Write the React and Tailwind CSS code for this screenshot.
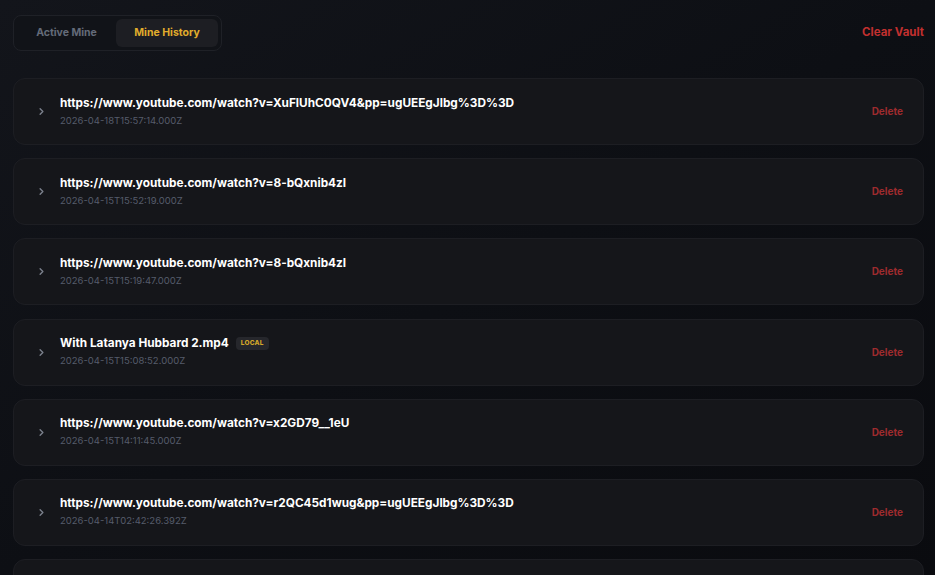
import { ChevronRight } from 'lucide-react';

const items = [
    { title: 'https://www.youtube.com/watch?v=XuFlUhC0QV4&pp=ugUEEgJlbg%3D%3D', date: '2026-04-18T15:57:14.000Z' },
    { title: 'https://www.youtube.com/watch?v=8-bQxnib4zI', date: '2026-04-15T15:52:19.000Z' },
    { title: 'https://www.youtube.com/watch?v=8-bQxnib4zI', date: '2026-04-15T15:19:47.000Z' },
    { title: 'With Latanya Hubbard 2.mp4', date: '2026-04-15T15:08:52.000Z', local: true },
    { title: 'https://www.youtube.com/watch?v=x2GD79__1eU', date: '2026-04-15T14:11:45.000Z' },
    { title: 'https://www.youtube.com/watch?v=r2QC45d1wug&pp=ugUEEgJlbg%3D%3D', date: '2026-04-14T02:42:26.392Z' },
    { title: 'https://www.youtube.com/watch?v=aQ0kLm3n9Xs', date: '2026-04-13T21:05:10.000Z' },
];

const HistoryRow = ({ item }) => {
    return (
        <div className="flex items-center h-[67px] shrink-0 rounded-xl border border-[#1d1e23] bg-[#15161a] pl-[22px] pr-5">
            <ChevronRight className="w-[11px] h-[11px] text-[#7b808c]" strokeWidth={3} />
            <div className="ml-[13px] flex-1 min-w-0 -mt-[1px]">
                <div className="flex items-center gap-[7px]">
                    <span className="text-[11.8px] font-bold text-white leading-[15px]">{item.title}</span>
                    {item.local && (
                        <span className="rounded bg-[#26272c] px-[5px] py-[2px] text-[6.5px] font-extrabold tracking-[0.2px] text-[#d4a82a]">LOCAL</span>
                    )}
                </div>
                <div className="mt-[4px] text-[9.5px] leading-3 text-[#555c6b]">{item.date}</div>
            </div>
            <button className="text-[10px] font-bold text-[#9e2b2e]">Delete</button>
        </div>
    );
};

const App = () => {
    return (
        <div className="h-[575px] overflow-hidden bg-gradient-to-br from-[#13151b] via-[#0d0f14] to-[#0a0b0f] pl-[13px] pr-[11px] pt-[15px]" style={{ fontFamily: 'Inter, "Noto Sans", sans-serif' }}>
            <div className="flex items-center justify-between">
                <div className="flex items-center rounded-lg border border-[#1f2127] bg-[#111318] p-[3px] h-[36px] w-[209px]">
                    <button className="h-[28px] w-[99px] rounded-md text-[10.5px] font-bold text-[#646b79]">Active Mine</button>
                    <button className="h-[28px] w-[102px] rounded-md bg-[#1d1e23] text-[10.5px] font-bold text-[#e1ad2c]">Mine History</button>
                </div>
                <button className="text-[11.5px] font-bold text-[#c2302f]">Clear Vault</button>
            </div>
            <div className="mt-[27px] flex flex-col gap-[13.2px]">
                {items.map((item, i) => (
                    <HistoryRow key={i} item={item} />
                ))}
            </div>
        </div>
    );
};

export default App;
